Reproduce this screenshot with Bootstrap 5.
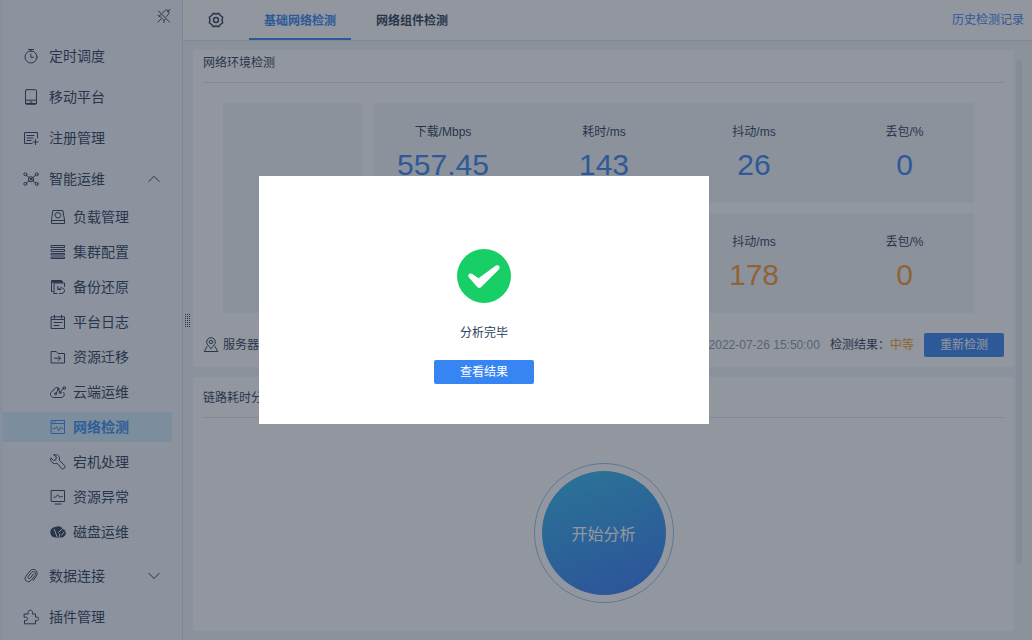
<!DOCTYPE html>
<html lang="zh-CN">
<head>
<meta charset="utf-8">
<meta name="viewport" content="width=device-width, initial-scale=1">
<title>网络检测</title>
<link href="https://cdn.jsdelivr.net/npm/bootstrap@5.3.0/dist/css/bootstrap.min.css" rel="stylesheet">
<style>
  body { font-family: "Liberation Sans", "Noto Sans CJK SC", sans-serif; font-size: 12px; line-height: 18px; color: #2c3d59; background: #f0f7fb; }
  a { text-decoration: none; color: inherit; }
  svg { flex: none; fill: none; stroke: currentColor; stroke-width: 1; stroke-linecap: round; stroke-linejoin: round; }
  .side { width: 183px; flex: none; background: #f3f8ff; border-left: 3px solid #e6f4ff; border-right: 1px solid #d5e0ef; font-size: 14px; line-height: 20px; }
  .pin-row { height: 35px; padding: 8px 10px; }
  .main-item { height: 41px; padding: 0 22px 0 20px; gap: 10px; }
  .sub-list { margin-bottom: 6px; }
  .sub-item { height: 30px; margin: 3px 10px 2px 0; padding-left: 47px; gap: 7px; }
  .sub-item.active { background: #d3ecff; color: #368fee; font-weight: 700; }
  .grip { width: 10px; flex: none; padding-bottom: 40px; }
  .topbar { height: 41px; border-bottom: 1px solid #dbe2eb; background: #fff; padding: 0 8px 0 25px; }
  .gear { stroke-width: 1.4; }
  .tabs { gap: 10px; margin-left: 25px; }
  .tab-btn { border: 0; border-bottom: 2px solid transparent; background: none; height: 40px; padding: 3px 15px 0; font-weight: 700; color: inherit; }
  .tab-btn.active { color: #3685f2; border-color: #3685f2; }
  .blue { color: #3685f2; }
  .orange { color: #f99a2c; }
  .panels { padding: 9px 0; gap: 10px; }
  .panel { background: #fff; padding: 0 10px; }
  .panel-title { font-size: 12px; line-height: 18px; font-weight: 400; margin: 0; padding: 4px 0 10px; border-bottom: 1px solid #dbe4ee; }
  .panel-title.roomy { padding-top: 12px; }
  .stats { margin: 20px 30px 0 20px; gap: 10px; }
  .tile-stack { gap: 10px; }
  .tile { background: #f0f7fb; }
  .thumb { width: 140px; flex: none; }
  .metrics { display: grid; grid-template-columns: 156fr 150fr 150fr 145fr; height: 100px; padding-top: 20px; text-align: center; }
  .metrics > :first-child { padding-right: 16px; }
  .metrics > :last-child { padding-left: 6px; }
  .metrics dt { font-weight: 400; }
  .metrics dd { font-size: 30px; line-height: 34px; margin: 7px 0 0; }
  .foot { height: 24px; margin: 20px 0 10px; }
  .foot span { line-height: 20px; }
  .verdict { margin: 0 10px; }
  .act { border: 0; border-radius: 2px; background: #3685f2; color: #fff; height: 24px; padding: 0 0 1px; }
  .act-sm { width: 80px; }
  .act-md { width: 100px; margin-top: 18px; }
  .done-text { margin: 21px 0 0; }
  .muted { color: #8c98ab; }
  .start-wrap { padding-top: 45px; }
  .ring { width: 140px; height: 140px; border: 1px solid #8fc4ec; border-radius: 50%; }
  .start { width: 124px; height: 124px; border: 0; border-radius: 50%; padding-top: 4px; color: #fff; font-size: 16px; background: linear-gradient(160deg, #2fbcf0, #3476f5); }
  .bar { width: 6px; margin: 18px 10px 75px 2px; border-radius: 3px; background: #e2eaf0; flex: none; }
  .mask { background: rgba(37, 45, 61, .5); padding: 0 64px 40px 0; }
  .result { width: 450px; padding: 73px 0 40px; background: #fff; }
</style>
</head>
<body>
<div class="d-flex vh-100 overflow-hidden">
  <nav class="side">
    <div class="pin-row d-flex justify-content-end"><svg width="16" height="16" viewBox="0 0 16 16"><path d="M2.500 3l11 11M6.500 5l2.200-2.200c1.500-1.200 2.800-.7 3.500 0s1.300 2 .1 3.500l-2 2.200M5 6.500L3.200 8.200c2 1 3.700 3 4.600 4.600L9.500 11M5 11l-3 3M11.500 3.500l2.500-2M2 7.500l1.500.7M8 14.500l-.2-1.700"/></svg></div>
    <a href="#" class="main-item d-flex align-items-center"><svg width="16" height="16" viewBox="0 0 16 16"><circle cx="8" cy="9" r="6"/><path d="M5.500 1.500h5M8 1.500V3M7.800 6v3.300h2.700"/></svg>定时调度</a>
    <a href="#" class="main-item d-flex align-items-center"><svg width="16" height="16" viewBox="0 0 16 16"><rect x="2.500" y=".7" width="11" height="14.600" rx="1"/><path d="M2.500 11.200h11M2.500 14.500h11M7 13h2"/></svg>移动平台</a>
    <a href="#" class="main-item d-flex align-items-center"><svg width="16" height="16" viewBox="0 0 16 16"><path d="M9 13.500H1.500v-11h13V8M4 5.500h7M4 8h6M4 10.500h4M12.500 9.500v5M10 12h5"/></svg>注册管理</a>
    <a href="#" class="main-item d-flex align-items-center"><svg width="16" height="16" viewBox="0 0 16 16"><circle cx="8" cy="8.300" r="2.600"/><circle cx="8" cy="8.300" r=".8"/><circle cx="2.300" cy="3.300" r="1.500"/><circle cx="13.700" cy="3.300" r="1.500"/><circle cx="2.300" cy="12.900" r="1.500"/><circle cx="13.700" cy="12.900" r="1.500"/><path d="M3.500 4.300L8 8M12.500 4.300L8 8M3.500 11.800l2.500-2M12.500 11.800l-2.500-2"/></svg>智能运维<svg class="ms-auto" width="12" height="12" viewBox="0 0 12 12"><path d="M.8 8.500L6 3.300l5.200 5.200"/></svg></a>
    <div class="sub-list d-flex flex-column">
      <a href="#" class="sub-item d-flex align-items-center"><svg width="16" height="16" viewBox="0 0 16 16"><path d="M3.200 1.500h9.600l1.700 9.500v3.500h-13V11zM1.500 11.500h13"/><path d="M6.500 3.800h3L11 6.300 9.500 8.800h-3L5 6.300z"/></svg>负载管理</a>
      <a href="#" class="sub-item d-flex align-items-center"><svg width="16" height="16" viewBox="0 0 16 16"><path d="M1.500 1.500h13v2h-13zM1.500 5.500h13v2h-13zM1.500 9.500h13v1.500h-13zM1.500 13h13v1.500h-13z"/></svg>集群配置</a>
      <a href="#" class="sub-item d-flex align-items-center"><svg width="16" height="16" viewBox="0 0 16 16"><path d="M3 12.500H1.500v-11h10v2M4 14.500V4h10.500v3.500M4 14.500h3M7.800 7.500v3h3M8.200 10.300c2-2.600 6-1.600 6.300 1.200.2 2.500-2.500 3.600-5 3"/><path stroke-width="2" d="M2 2.700h10"/></svg>备份还原</a>
      <a href="#" class="sub-item d-flex align-items-center"><svg width="16" height="16" viewBox="0 0 16 16"><path d="M1.500 2.800h13v11.700h-13zM1.500 5.500h13M4.500 1.300v3M11.500 1.300v3M4 8.500h8M4 11.500h5"/></svg>平台日志</a>
      <a href="#" class="sub-item d-flex align-items-center"><svg width="16" height="16" viewBox="0 0 16 16"><path d="M1.500 2.500h4.700L8 4.500h6.500v9.500h-13zM4.500 9.200h6M8.300 7l2.300 2.200-2.300 2.200"/></svg>资源迁移</a>
      <a href="#" class="sub-item d-flex align-items-center"><svg width="16" height="16" viewBox="0 0 16 16"><path d="M8.500 4C7 2.500 4 3.500 3.700 6.500 1.500 7-.3 9 .8 11.500c.6 1.400 1.600 2 3 2h7.500c2.800 0 3.700-2.600 2.400-5M6 9.500l2.200-4 2 2.500 3.500-4"/><circle cx="14.300" cy="4" r="1.300"/><circle cx="10.200" cy="8.500" r="1"/><circle cx="5.500" cy="9.800" r="1"/><circle cx="8.300" cy="5" r=".8"/></svg>云端运维</a>
      <a href="#" class="sub-item active d-flex align-items-center" aria-current="page"><svg width="16" height="16" viewBox="0 0 16 16"><path d="M1.500 1.500h13v13h-13zM1.500 4.500h13M3.300 3h.4M5.300 3h.4M3 9.500h2.300l1.400-2 2 4.500 2-4 .8 1.500H13"/></svg>网络检测</a>
      <a href="#" class="sub-item d-flex align-items-center"><svg width="16" height="16" viewBox="0 0 16 16"><path d="M4 .8C7.500 0 10.500 2.500 9.300 6.300l5.300 5.200c1.500 2-1 4.300-3 3L7 9.200C3.500 10.500-.3 8 .8 3.800l2.700 2.700 2.300-.7.500-2.500z"/></svg>宕机处理</a>
      <a href="#" class="sub-item d-flex align-items-center"><svg width="16" height="16" viewBox="0 0 16 16"><path d="M1.500 1.500h13v11h-13zM5 15h6M4 8.200h1.500L7.700 5.800l2.200 2.700 1-1h1.300"/></svg>资源异常</a>
      <a href="#" class="sub-item d-flex align-items-center"><svg width="16" height="16" viewBox="0 0 16 16"><path fill="currentColor" stroke="none" d="M5 3C8 1.700 11.500 2 12.800 5c1.800.3 3.200 2 3 4.300-.2 2.700-2 4.200-4.800 4.200H5.500C2.500 13.300.3 11.300.3 8.300.3 5.500 2.300 3.300 5 3z"/><path stroke="#f3f8ff" d="M4.300 5.500l2.700 7M8.300 8.500l4-3.500M9.500 12.500l.3-2.500M11.700 11l2.300-3"/></svg>磁盘运维</a>
    </div>
    <a href="#" class="main-item d-flex align-items-center"><svg width="16" height="16" viewBox="0 0 16 16"><path d="M10.500 6L7.300 10c-1.300 1.400-3.200 0-2-1.600L8.500 4.600c2.200-2.400 5.400 0 3.600 2.700l-3.800 4.800c-3.200 3.700-8 .4-5.600-3.600L7 3c3.200-3.700 9-.4 6.600 4.500l-3.400 5"/></svg>数据连接<svg class="ms-auto" width="12" height="12" viewBox="0 0 12 12"><path d="M.8 3.300L6 8.500l5.200-5.200"/></svg></a>
    <a href="#" class="main-item d-flex align-items-center"><svg width="16" height="16" viewBox="0 0 16 16"><path d="M1.500 5h3.800C4.500 2.800 5.500 1.200 7.300 1.200S10 2.800 9.300 5h3.200v3.200c2-.6 3.200.3 3.200 1.700s-1.300 2.200-3.200 1.600v3.300h-11V11.500c2 .5 3-.4 3-1.700s-1-2.200-3-1.600z"/></svg>插件管理</a>
  </nav>

  <div class="flex-grow-1 d-flex flex-column">
    <header class="topbar d-flex align-items-center">
      <svg class="gear" width="16" height="16" viewBox="0 0 16 16"><path d="M5.300 1.300L8 2l2.700-.7 1.700 2.200L14.700 5.300 14 8l.7 2.700-2.300 1.800-1.700 2.200L8 14l-2.700.7-1.700-2.200-2.300-1.800L2 8l-.7-2.700 2.300-1.800z"/><circle cx="8" cy="8" r="2.500"/></svg>
      <div class="tabs d-flex" role="tablist">
        <button type="button" class="tab-btn active" role="tab" aria-selected="true">基础网络检测</button>
        <button type="button" class="tab-btn" role="tab" aria-selected="false">网络组件检测</button>
      </div>
      <a href="#" class="blue ms-auto">历史检测记录</a>
    </header>

    <div class="d-flex flex-grow-1">
      <div class="grip d-flex align-items-center"><svg width="8" height="13" viewBox="0 0 8 13"><path stroke-linecap="butt" stroke-dasharray="1 1" d="M2.500 0v13M4.500 0v13M6.500 0v13"/></svg></div>
      <main class="panels flex-grow-1 d-flex flex-column">
        <section class="panel">
          <h2 class="panel-title">网络环境检测</h2>
          <div class="stats d-flex">
            <div class="tile thumb"></div>
            <div class="tile-stack flex-grow-1 d-flex flex-column">
              <dl class="tile metrics mb-0">
                <div><dt>下载/Mbps</dt><dd class="blue">557.45</dd></div>
                <div><dt>耗时/ms</dt><dd class="blue">143</dd></div>
                <div><dt>抖动/ms</dt><dd class="blue">26</dd></div>
                <div><dt>丢包/%</dt><dd class="blue">0</dd></div>
              </dl>
              <dl class="tile metrics mb-0">
                <div></div>
                <div></div>
                <div><dt>抖动/ms</dt><dd class="orange">178</dd></div>
                <div><dt>丢包/%</dt><dd class="orange">0</dd></div>
              </dl>
            </div>
          </div>
          <div class="foot d-flex align-items-center">
            <svg class="me-1" width="16" height="16" viewBox="0 0 16 16"><path d="M8 11.500C5 8.500 3.700 7 3.700 5a4.300 4.300 0 0 1 8.600 0c0 2-1.300 3.500-4.300 6.500zM4 9.500L1.200 14.500h13.600L12 9.500"/><circle cx="8" cy="5" r="1.700"/></svg>
            <span>服务器</span>
            <span class="muted ms-auto">2022-07-26 15:50:00</span>
            <span class="verdict">检测结果：<span class="orange">中等</span></span>
            <button type="button" class="act act-sm">重新检测</button>
          </div>
        </section>
        <section class="panel flex-grow-1">
          <h2 class="panel-title roomy">链路耗时分</h2>
          <div class="start-wrap d-flex justify-content-center">
            <div class="ring d-flex align-items-center justify-content-center"><button type="button" class="start">开始分析</button></div>
          </div>
        </section>
      </main>
      <div class="bar"></div>
    </div>
  </div>
</div>

<div class="mask position-fixed top-0 start-0 w-100 h-100 d-flex align-items-center justify-content-center">
  <div class="result d-flex flex-column align-items-center" role="dialog" aria-modal="true" aria-labelledby="done">
    <svg width="54" height="54" viewBox="0 0 54 54"><circle cx="27" cy="27" r="27" fill="#17cf66" stroke="none"/><path fill="#fff" stroke="none" d="M12 28.500c-2-2.500.8-5.300 3.500-3.500l6 4.200L38.500 16.800c3-2 5.500 1 3.300 3.600L24.500 37.800c-1.700 1.700-3.300 1.500-4.700-.3z"/></svg>
    <p id="done" class="done-text">分析完毕</p>
    <button type="button" class="act act-md">查看结果</button>
  </div>
</div>
<script src="https://cdn.jsdelivr.net/npm/bootstrap@5.3.0/dist/js/bootstrap.bundle.min.js"></script>
</body>
</html>
